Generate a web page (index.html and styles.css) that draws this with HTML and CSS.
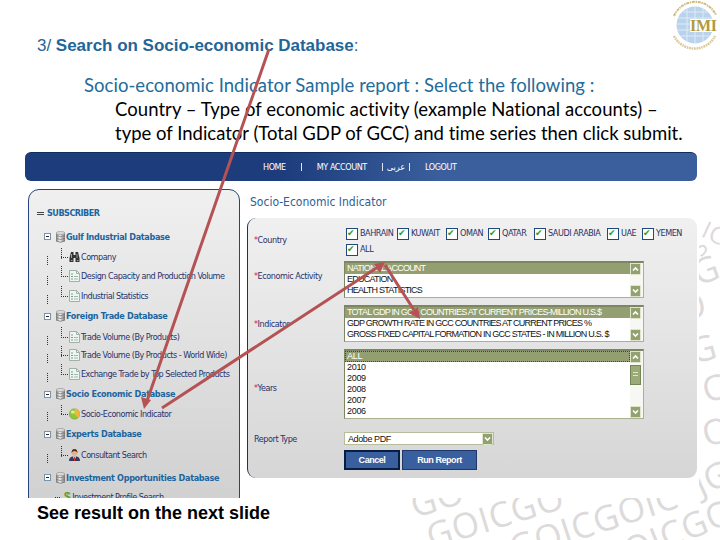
FILE: index.html
```
<!DOCTYPE html>
<html lang="en">

<head>
        <meta charset="UTF-8">
        <meta name="viewport" content="width=device-width, initial-scale=1.0">
        <title>Socio-economic Database</title>
        <link rel="stylesheet" href="styles.css">
</head>

<body>
        <!-- shared icons -->
        <svg class="defs" width="0" height="0">
                <linearGradient id="metal" x1="0" x2="1">
                        <stop offset="0" stop-color="#777" />
                        <stop offset=".4" stop-color="#f4f4f4" />
                        <stop offset="1" stop-color="#777" />
                </linearGradient>
                <symbol id="db" viewBox="0 0 11 12">
                        <path d="M1 2v8q4.500 2.500 9 0v-8z" fill="url(#metal)" />
                        <ellipse cx="5.500" cy="2" rx="4.500" ry="1.500" fill="#ddd" stroke="#888" stroke-width=".6" />
                        <path d="M1 4.500q4.500 2.500 9 0M1 7.300q4.500 2.500 9 0M1 10q4.500 2.500 9 0" fill="none" stroke="#777" stroke-width=".8" />
                </symbol>
                <symbol id="doc" viewBox="0 0 11 12">
                        <path d="M.5 .5h7l3 3v8h-10z" fill="#eef4f0" stroke="#9fb1a8" />
                        <path d="M7.500 .5v3h3" fill="none" stroke="#9fb1a8" />
                        <path d="M2 4h2M2 6.500h2M2 9h2" stroke="#6fa585" stroke-width="1.200" />
                        <path d="M5 6.500h4M5 9h4" stroke="#a6b6b0" />
                </symbol>
                <symbol id="find" viewBox="0 0 11 12">
                        <path d="M2 1h2.500v3h2v-3h2.500l1.500 6v4h-4v-4h-2v4h-4v-4z" fill="#333" />
                        <path d="M2.500 3v4M8 3v4M2 9.500h1.500M8 9.500h1.500" stroke="#aaa" stroke-width=".9" />
                </symbol>
                <symbol id="pie" viewBox="0 0 11 12">
                        <circle cx="5.500" cy="6" r="5.200" fill="#8cc63a" stroke="#709a35" stroke-width=".5" />
                        <path d="M5.500 6v-5.200a5.200 5.200 0 0 1 3.500 9z" fill="#f4b536" />
                        <ellipse cx="3.800" cy="4" rx="2" ry="1.500" fill="#d9efa8" />
                </symbol>
                <symbol id="man" viewBox="0 0 11 12">
                        <path d="M0 12q0-4 3.500-4.500h4q3.500 .5 3.500 4.500z" fill="#34395a" />
                        <path d="M4 7.500h3l-1.500 4z" fill="#fff" />
                        <path d="M5.500 8v4" stroke="#c33" />
                        <circle cx="5.500" cy="4" r="2.800" fill="#e8b184" />
                        <path d="M2.500 4q0-4 3-4t3 4q-1-2-3-2t-3 2z" fill="#4d3020" />
                </symbol>
                <symbol id="up" viewBox="0 0 11 12">
                        <rect x=".5" y=".5" width="10" height="11" rx="1" fill="#93a070" stroke="#dfe5cd" />
                        <path d="M3 7.500l2.500-2.500 2.500 2.500" fill="none" stroke="#fff" stroke-width="1.600" />
                </symbol>
                <symbol id="down" viewBox="0 0 11 12">
                        <rect x=".5" y=".5" width="10" height="11" rx="1" fill="#93a070" stroke="#dfe5cd" />
                        <path d="M3 4.500l2.500 2.500 2.500-2.500" fill="none" stroke="#fff" stroke-width="1.600" />
                </symbol>
        </svg>

        <svg class="watermark" width="720" height="540">
                <text transform="translate(415 518) rotate(-17)">GO</text>
                <text transform="translate(431 549) rotate(-17)">GOICGO</text>
                <text transform="translate(514 561) rotate(-18)">GOICGOIC</text>
                <text transform="translate(630 564) rotate(-22)">OICGO</text>
                <text transform="translate(701 497) rotate(-25)">JG</text>
                <text transform="translate(706 447) rotate(-15)">O</text>
                <text transform="translate(706 403) rotate(-15)">C</text>
                <text transform="translate(694 364) rotate(-15)">G</text>
                <text transform="translate(682 322) rotate(-15)">O</text>
                <text transform="translate(698 286) rotate(-20)">G</text>
                <text class="small" transform="translate(701 258) rotate(-50)">S</text>
                <text class="small" transform="translate(700 236) rotate(25)">IC</text>
        </svg>

        <header class="slide-head">
                <h1><span>3/</span> Search on Socio-economic Database<span>:</span></h1>
                <svg class="logo" width="50" height="50" viewBox="0 0 50 50">
                        <circle cx="26" cy="25" r="18.500" fill="#b9d3ed" />
                        <path d="M9 18h34M8 24h36M8 30h36M12 36h28M14 12h25M18 8v34M26 6v38M34 8v34" stroke="#dfebf7" stroke-width="1" />
                        <rect x="21" y="19" width="28" height="13" fill="#fff" />
                        <path d="M5 16a23 23 0 0 1 42-1" fill="none" stroke="#cdbd83" stroke-width="2" stroke-dasharray="3 .7 1.500 .7" />
                        <path d="M5 36a23 23 0 0 0 41 0" fill="none" stroke="#dacb9c" stroke-width="2.500" stroke-dasharray="2 .7 1.500 .7" />
                        <text x="21" y="31" textLength="27">IMI</text>
                </svg>
        </header>

        <div class="intro">
                <p class="blue">Socio-economic Indicator Sample report : Select the following :</p>
                <p class="wide">Country – Type of economic activity (example National accounts) –</p>
                <p>type of Indicator (Total GDP of GCC) and time series then click submit.</p>
        </div>

        <div class="app">
                <nav>
                        <a>HOME</a><i></i><a>MY ACCOUNT</a><i></i><a class="arabic" lang="ar">عربى</a><i></i><a>LOGOUT</a>
                </nav>
                <div class="columns">
                        <ul class="tree">
                                <li class="root"><b class="minus"></b>SUBSCRIBER</li>
                                <li class="group"><b class="box"></b><svg><use href="#db" /></svg>Gulf Industrial Database</li>
                                <li class="leaf"><svg><use href="#find" /></svg>Company</li>
                                <li class="leaf"><svg><use href="#doc" /></svg>Design Capacity and Production Volume</li>
                                <li class="leaf"><svg><use href="#doc" /></svg>Industrial Statistics</li>
                                <li class="group"><b class="box"></b><svg><use href="#db" /></svg>Foreign Trade Database</li>
                                <li class="leaf"><svg><use href="#doc" /></svg>Trade Volume (By Products)</li>
                                <li class="leaf"><svg><use href="#doc" /></svg>Trade Volume (By Products - World Wide)</li>
                                <li class="leaf"><svg><use href="#doc" /></svg>Exchange Trade by Top Selected Products</li>
                                <li class="group"><b class="box"></b><svg><use href="#db" /></svg>Socio Economic Database</li>
                                <li class="leaf"><svg><use href="#pie" /></svg>Socio-Economic Indicator</li>
                                <li class="group"><b class="box"></b><svg><use href="#db" /></svg>Experts Database</li>
                                <li class="leaf"><svg><use href="#man" /></svg>Consultant Search</li>
                                <li class="group"><b class="box"></b><svg><use href="#db" /></svg>Investment Opportunities Database</li>
                                <li class="leaf last"><em>$</em>Investment Profile Search</li>
                        </ul>
                        <main>
                                <h2>Socio-Economic Indicator</h2>
                                <form class="panel">
                                        <label><s>*</s>Country</label>
                                        <div class="countries">
                                                <span>BAHRAIN</span><span>KUWAIT</span><span>OMAN</span><span>QATAR</span><span>SAUDI ARABIA</span><span>UAE</span><span>YEMEN</span><span>ALL</span>
                                        </div>
                                        <label class="raised"><s>*</s>Economic Activity</label>
                                        <div class="list">
                                                <ol>
                                                        <li class="on">NATIONAL ACCOUNT</li>
                                                        <li>EDUCATION</li>
                                                        <li>HEALTH STATISTICS</li>
                                                </ol>
                                                <div class="scroll"><svg><use href="#up" /></svg><svg><use href="#down" /></svg></div>
                                        </div>
                                        <label><s>*</s>Indicator</label>
                                        <div class="list">
                                                <ol>
                                                        <li class="on">TOTAL GDP IN GCC COUNTRIES AT CURRENT PRICES-MILLION U.S.$</li>
                                                        <li>GDP GROWTH RATE IN GCC COUNTRIES AT CURRENT PRICES %</li>
                                                        <li>GROSS FIXED CAPITAL FORMATION IN GCC STATES - IN MILLION U.S. $</li>
                                                </ol>
                                                <div class="scroll"><svg><use href="#up" /></svg><svg><use href="#down" /></svg></div>
                                        </div>
                                        <label class="lowered"><s>*</s>Years</label>
                                        <div class="list years">
                                                <ol>
                                                        <li class="on dotted">ALL</li>
                                                        <li>2010</li>
                                                        <li>2009</li>
                                                        <li>2008</li>
                                                        <li>2007</li>
                                                        <li>2006</li>
                                                </ol>
                                                <div class="scroll"><svg><use href="#up" /></svg><b class="thumb"></b><svg><use href="#down" /></svg></div>
                                        </div>
                                        <label class="lowered">Report Type</label>
                                        <div class="select">Adobe PDF<svg><use href="#down" /></svg></div>
                                        <div class="buttons">
                                                <button type="button" class="cancel">Cancel</button>
                                                <button type="button">Run Report</button>
                                        </div>
                                </form>
                        </main>
                </div>
        </div>

        <footer>See result on the next slide</footer>

        <!-- arrows drawn over the page -->
        <svg class="arrows" width="720" height="540">
                <path d="M269 49L147 401M162 408L378 267M385 265L414 310" />
                <polygon points="144,409 141,397 151,400" />
                <polygon points="385,262 380,273 374,264" />
                <polygon points="420,319 409,313 418,307" />
        </svg>
</body>

</html>
```
FILE: styles.css
```
* {
        box-sizing: border-box;
}

body {
        margin: 0;
        width: 720px;
        height: 540px;
        overflow: hidden;
        position: relative;
        background-color: #fff;
        font-family: "DejaVu Sans Condensed", "DejaVu Sans", sans-serif;
        font-size: 9px;
        color: #26336b;
}

h1, h2, p, ul, ol {
        margin: 0;
        padding: 0;
        list-style: none;
}

.defs {
        position: absolute;
}

.watermark {
        position: absolute;
        top: 0;
        left: 0;
        z-index: -1;
        font-family: "Open Sans", sans-serif;
        font-size: 35px;
        letter-spacing: .800px;
        fill: #dcdada;
}

.watermark .small {
        font-size: 24px;
}

/* slide text */
.slide-head {
        display: flex;
        justify-content: space-between;
        height: 72px;
        padding-left: 37px;
}

.slide-head h1 {
        padding-top: 36px;
        font: bold 17px/20px "Liberation Sans", Arial, sans-serif;
        letter-spacing: -.020px;
        color: #1f6699;
}

.slide-head h1 span {
        font-weight: normal;
}

.logo {
        margin-right: 1px;
        font: bold 16px "Liberation Serif", serif;
        fill: #b19a3c;
}

.intro {
        height: 74px;
        padding: 1px 0 0 115px;
        font: 18.500px/24px Lato, sans-serif;
        font-variant-ligatures: none;
        color: #000;
        white-space: nowrap;
}

.intro p {
        height: 24px;
}

.intro .blue {
        margin-left: -31px;
        color: #236c9b;
        letter-spacing: .040px;
}

.intro .wide {
        letter-spacing: .060px;
}

/* application window */
.app {
        width: 674px;
        height: 352px;
        margin-left: 25px;
        padding-top: 6px;
        background-color: #fff;
        overflow: hidden;
}

nav {
        display: flex;
        align-items: center;
        width: 672px;
        height: 29px;
        padding-left: 238px;
        border-top: 1px solid #102c5c;
        border-radius: 6px;
        background: linear-gradient(to right, #1c3c7c 38%, #3b5f9c 62%);
        color: #fff;
        letter-spacing: -.450px;
}

nav i {
        width: 1px;
        height: 8px;
        margin: 0 15px;
        background-color: #dfe6f2;
}

nav .arabic {
        margin: 0 -11px;
}

.columns {
        display: flex;
        gap: 7px;
        padding: 8px 0 0 3px;
}

.tree {
        display: grid;
        grid-template-rows: 24px 23px 18px 20px 19px 22px 19px 18px 19px 22px 17px 24px 18px 27px 12px;
        width: 212px;
        height: 318px;
        padding-top: 11px;
        border: 1px solid #28447f;
        border-radius: 11px 11px 0 0;
        background: linear-gradient(#f0f0f0, #d0d0d0);
        white-space: nowrap;
        letter-spacing: -.500px;
        overflow: hidden;
}

.tree li {
        display: flex;
        align-items: center;
}

.tree svg {
        flex: none;
        width: 11px;
        height: 12px;
}

.tree .root,
.tree .group {
        color: #1b659f;
        font-weight: bold;
        letter-spacing: -.320px;
}

.tree .root {
        padding-left: 8px;
        letter-spacing: -.500px;
}

.minus {
        width: 7px;
        height: 3px;
        margin-right: 3px;
        border: solid #444;
        border-width: 1px 0;
}

.tree .group {
        padding-left: 15px;
}

.box {
        display: grid;
        place-items: center;
        width: 7px;
        height: 7px;
        margin-right: 4px;
        border: 1px solid #7894aa;
        background-color: #fff;
}

.box::after {
        content: "";
        width: 3px;
        height: 1px;
        background-color: #223;
}

/* dotted connectors in front of each leaf */
.tree .leaf {
        padding-left: 18px;
        line-height: 10px;
}

.leaf::before {
        content: "";
        align-self: stretch;
        width: 22px;
        background:
                repeating-linear-gradient(#333 0 1px, transparent 1px 2px) 0 100% / 1px 10px no-repeat,
                repeating-linear-gradient(#333 0 1px, transparent 1px 2px) 14px 0 / 1px 60% no-repeat,
                repeating-linear-gradient(to right, #333 0 1px, transparent 1px 2px) 14px 55% / 7px 1px no-repeat;
}

.leaf svg {
        margin-right: 1px;
}

.tree .last::before {
        width: 16px;
        background: repeating-linear-gradient(to right, #333 0 1px, transparent 1px 2px) 8px 50% / 6px 1px no-repeat;
}

.leaf em {
        margin: 0 2px 0 1px;
        color: #659a31;
        font: bold 12px/10px "Liberation Sans", sans-serif;
}

/* form */
main {
        width: 450px;
}

h2 {
        height: 29px;
        padding: 5px 0 0 3px;
        font-size: 12px;
        font-weight: normal;
        line-height: 16px;
        color: #2d6196;
}

.panel {
        display: grid;
        grid-template-columns: 90px 300px;
        grid-template-rows: 28px 37px 37px 70px 19px 20px;
        row-gap: 7px;
        align-items: center;
        align-content: start;
        height: 260px;
        padding: 8px 0 0 6px;
        border-left: 1px solid #1f3556;
        border-radius: 9px;
        background: linear-gradient(#f0f0f0, #d6d6d6);
        letter-spacing: -.450px;
        white-space: nowrap;
}

.panel s {
        color: #d22;
        text-decoration: none;
}

.panel .raised {
        padding-bottom: 7px;
}

.panel .lowered {
        padding-top: 7px;
}

.countries {
        display: grid;
        grid-template-columns: 51px 49px 42px 46px 73px 35px 40px;
        row-gap: 4px;
        padding: 4px 0 0 2px;
        line-height: 11px;
}

.countries span {
        display: flex;
        gap: 2px;
}

.countries span::before {
        content: "✔";
        width: 10px;
        height: 10px;
        border: 1px solid #1f4b7c;
        background-color: #fff;
        color: #219a32;
        font: 9px/8px "DejaVu Sans", sans-serif;
        letter-spacing: 0;
}

.list {
        display: flex;
        height: 100%;
        border: 1px solid #a9b18e;
        border-top: 2px solid #7c8762;
        border-left-color: #7c8762;
        background-color: #fff;
        font: 9px/11px "Liberation Sans", Arial, sans-serif;
        letter-spacing: -.760px;
        color: #111;
}

.years {
        letter-spacing: -.300px;
}

.list ol {
        flex: 1;
}

.list li {
        height: 11px;
        padding-left: 2px;
}

.list .on {
        background-color: #939f70;
        color: #fff;
}

.list .dotted {
        outline: 1px dotted #444;
        outline-offset: -1px;
}

.scroll {
        display: flex;
        flex-direction: column;
        width: 13px;
        padding-right: 2px;
        background-color: #f7f8f3;
}

.scroll svg,
.select svg {
        flex: none;
        width: 11px;
        height: 12px;
}

.scroll svg:last-child {
        margin-top: auto;
}

.thumb {
        height: 20px;
        margin-top: 2px;
        border: 1px solid #748556;
        background: repeating-linear-gradient(#dde5cb 0 1px, transparent 1px 3px) center / 5px 6px no-repeat, #9bab78;
}

.select {
        display: flex;
        align-items: center;
        align-self: end;
        justify-content: space-between;
        width: 150px;
        height: 13px;
        padding-left: 3px;
        border: 1px solid #b6bd9d;
        background-color: #fff;
        font: 9px "Liberation Sans", sans-serif;
        letter-spacing: -.400px;
        color: #111;
}

.buttons {
        grid-column: 2;
        display: flex;
        gap: 2px;
        margin-top: -4px;
}

.buttons button {
        width: 75px;
        height: 20px;
        padding: 0;
        border: 1px solid #1c376c;
        background-color: #395f9e;
        color: #fff;
        font: bold 9px "Liberation Sans", sans-serif;
        letter-spacing: -.450px;
}

.buttons .cancel {
        width: 56px;
        border: 2px solid #081d42;
}

footer {
        padding: 4px 0 0 37px;
        font: bold 18px/22px "Liberation Sans", Arial, sans-serif;
        color: #000;
}

.arrows {
        position: absolute;
        top: 0;
        left: 0;
        fill: #b55254;
}

.arrows path {
        fill: none;
        stroke: #b55254;
        stroke-width: 3;
}
```
